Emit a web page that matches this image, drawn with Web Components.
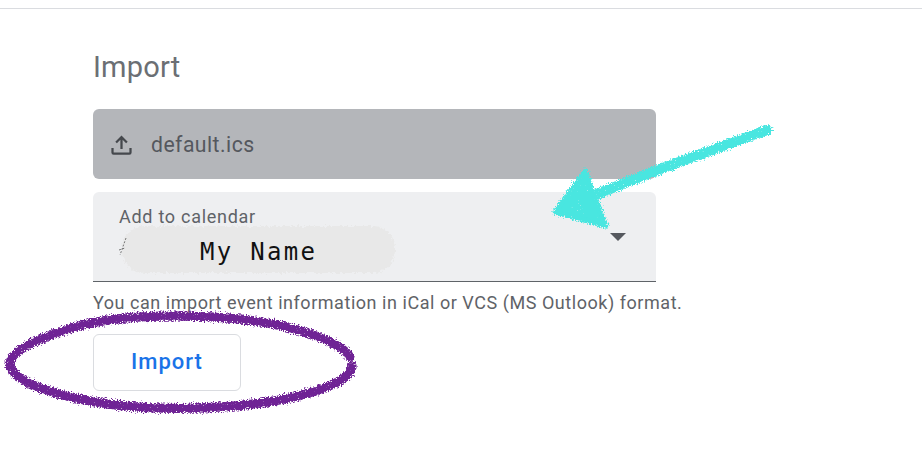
<!DOCTYPE html>
<html lang="en"><head><meta charset="utf-8"><title>Import</title>
<style>
html,body{margin:0;padding:0;background:#fff}
body{font-family:Roboto,"Noto Sans",sans-serif;color:#5f6368;width:922px;height:456px;overflow:hidden;position:relative}
</style></head><body>
<import-panel>
  <file-field name="default.ics"></file-field>
  <calendar-select label="Add to calendar" value="My Name"></calendar-select>
  <p slot="hint">You can import event information in iCal or VCS (MS Outlook) format.</p>
  <outline-button slot="action">Import</outline-button>
</import-panel>
<sketch-marks></sketch-marks>
<script>
function def(name,html,after){
  customElements.define(name,class extends HTMLElement{
    constructor(){super();const r=this.attachShadow({mode:'open'});r.innerHTML=html;}
    connectedCallback(){if(after)after(this,this.shadowRoot);}
  });
}
def('import-panel',`<style>
:host{display:block;border-top:1px solid #dadce0;margin-top:8px;padding:0 0 0 93px;box-sizing:border-box}
h2{margin:0 0 23px;padding-top:39px;font:400 29px/38px Roboto,sans-serif;letter-spacing:.2px;color:#6b6f74}
.fields{width:563px;display:flex;flex-direction:column;gap:13px}
::slotted(p){margin:11px 0 21px;font:400 18px/20px Roboto,sans-serif;letter-spacing:.54px;color:#5f6368;white-space:nowrap}
</style><h2>Import</h2><div class="fields"><slot></slot></div><slot name="hint"></slot><slot name="action"></slot>`);
def('file-field',`<style>
:host{display:flex;align-items:center;height:70px;background:#b4b6ba;border-radius:6px;padding-left:15px;gap:16px;box-sizing:border-box}
svg{width:27px;height:27px;display:block;flex:none}
span{font:400 21.2px/28px Roboto,sans-serif;letter-spacing:.45px;color:#55585e;position:relative;top:1px}
</style><svg viewBox="0 0 24 24"><path fill="#45484d" d="M11 16h2V7.800l3.100 3.100 1.400-1.400L12 4 6.500 9.500l1.400 1.400L11 7.800zM3 15h2v4h14v-4h2v4a2 2 0 0 1-2 2H5a2 2 0 0 1-2-2z"/></svg><span></span>`,(h,r)=>{r.querySelector('span').textContent=h.getAttribute('name')});
def('calendar-select',`<style>
:host{display:block;height:90px;background:#eeeff1;border-radius:6px 6px 0 0;border-bottom:1px solid #5f6368;box-sizing:border-box;padding:13px 30px 0 26px;position:relative}
.label{font:400 18px/24px Roboto,sans-serif;letter-spacing:.72px;color:#5f6368}
.row{display:flex;align-items:center;justify-content:space-between;height:42px;margin-top:-1px}
.wrap{position:relative;height:34px;top:3px}
.smudge{position:absolute;left:1px;top:-12px;width:275px;height:50px;overflow:visible}
.val{position:relative;font:400 24px/34px "DejaVu Sans Mono",monospace;letter-spacing:2.3px;color:#111;margin-left:81px}
.caret{width:0;height:0;border:8px solid transparent;border-top-color:#55585e;border-bottom:0;margin-bottom:25px}
</style><div class="label"></div><div class="row"><div class="wrap"><svg class="smudge" viewBox="0 0 275 50"><defs><filter id="r" x="-5%" y="-20%" width="110%" height="140%" color-interpolation-filters="sRGB"><feTurbulence type="fractalNoise" baseFrequency=".35" numOctaves="2" seed="4"/><feDisplacementMap in="SourceGraphic" scale="7" xChannelSelector="R" yChannelSelector="G"/></filter></defs><rect x="2" y="3" width="273" height="47" rx="22" fill="#e8e8e8" filter="url(#r)"/><path d="M6 15 0 32M-1 27l6-2" stroke="#666" stroke-width=".9" fill="none" stroke-dasharray="2 1.500"/></svg><div class="val"></div></div><div class="caret"></div></div>`,(h,r)=>{r.querySelector('.label').textContent=h.getAttribute('label');r.querySelector('.val').textContent=h.getAttribute('value')});
def('outline-button',`<style>
:host{display:flex;align-items:center;justify-content:center;width:148px;height:57px;box-sizing:border-box;border:1px solid #dadce0;border-radius:6px;background:#fff;font:500 22px/28px Roboto,sans-serif;letter-spacing:1px;color:#1a73e8;padding-bottom:2px}
</style><slot></slot>`);
const rough=(id,seed)=>`<filter id="${id}" x="-10%" y="-10%" width="120%" height="120%" color-interpolation-filters="sRGB"><feTurbulence type="fractalNoise" baseFrequency=".7" numOctaves="2" seed="${seed}" result="n"/><feDisplacementMap in="SourceGraphic" in2="n" scale="7" xChannelSelector="R" yChannelSelector="G" result="d"/><feColorMatrix in="n" type="matrix" values="0 0 0 0 0 0 0 0 0 0 0 0 0 0 0 0 0 9 0 -1.500" result="m"/><feComposite in="d" in2="m" operator="in" result="s"/><feGaussianBlur in="d" stdDeviation=".5" result="b"/><feComponentTransfer in="b" result="f"><feFuncA type="linear" slope=".45"/></feComponentTransfer><feMerge><feMergeNode in="f"/><feMergeNode in="s"/></feMerge></filter>`;
def('sketch-marks',`<style>
:host{display:block;position:absolute;inset:0;pointer-events:none}
svg{position:absolute;left:0;top:0;width:922px;height:456px}
</style><svg viewBox="0 0 922 456"><defs>${rough('c',7)}${rough('p',3)}</defs>
<g filter="url(#c)" fill="#49e6e0" stroke="#49e6e0" stroke-linejoin="round">
<path d="M767 130 L663 168 L597 194" fill="none" stroke-width="10" stroke-linecap="round"/>
<path d="M585 171 L555 212 L606 226 Z" stroke-width="5"/>
</g>
<path filter="url(#p)" fill="none" stroke="#6f2395" stroke-width="9" stroke-linecap="round" d="M350 357 C342 343 300 326 240 319 C190 314 120 314 75 327 C40 338 10 350 10 364 C11 378 40 392 90 401 C140 411 220 411 280 400 C320 392 351 380 352 366"/>
</svg>`);
</script></body></html>
